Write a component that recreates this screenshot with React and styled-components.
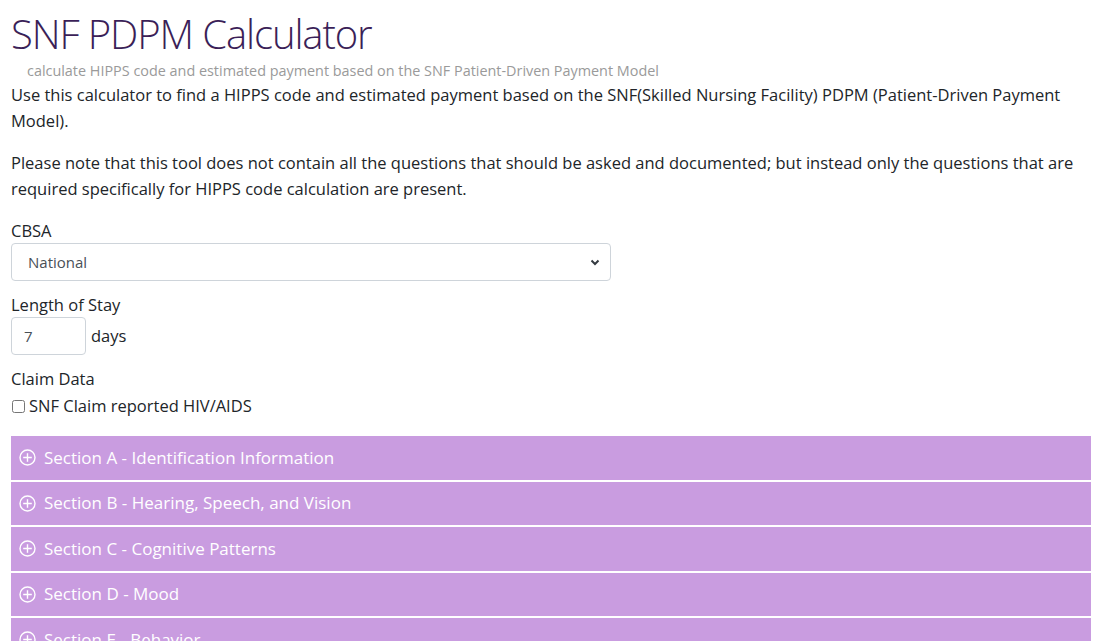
import styled, { createGlobalStyle } from 'styled-components';

const GlobalStyle = createGlobalStyle`
    body {
        margin: 0;
        font-family: "Open Sans", "Noto Sans", sans-serif;
        color: #212529;
        background: #fff;
    }
`;

const sections = [
    'Section A - Identification Information',
    'Section B - Hearing, Speech, and Vision',
    'Section C - Cognitive Patterns',
    'Section D - Mood',
    'Section E - Behavior',
];

const PlusCircle = () => (
    <svg width="17" height="17" viewBox="0 0 17 17" fill="none" stroke="#fff" strokeWidth="1.4">
        <circle cx="8.5" cy="8.5" r="7.5" />
        <path d="M8.5 4.2v8.6M4.2 8.5h8.6" />
    </svg>
);

const App = () => {
    return (
        <Page>
            <GlobalStyle />
            <Title>SNF PDPM Calculator</Title>
            <Subtitle>calculate HIPPS code and estimated payment based on the SNF Patient-Driven Payment Model</Subtitle>
            <Paragraph>
                Use this calculator to find a HIPPS code and estimated payment based on the SNF(Skilled Nursing Facility) PDPM (Patient-Driven Payment Model).
            </Paragraph>
            <Paragraph>
                Please note that this tool does not contain all the questions that should be asked and documented; but instead only the questions that are required specifically for HIPPS code calculation are present.
            </Paragraph>

            <FormGroup>
                <Label>CBSA</Label>
                <SelectBox>
                    <span>National</span>
                    <svg width="10" height="8" viewBox="0 0 10 8">
                        <path d="M1.5 2.5l3.5 3.5 3.5-3.5" fill="none" stroke="#343a40" strokeWidth="2" />
                    </svg>
                </SelectBox>
            </FormGroup>

            <FormGroup>
                <Label>Length of Stay</Label>
                <InlineRow>
                    <NumberInput defaultValue="7" />
                    <span>days</span>
                </InlineRow>
            </FormGroup>

            <FormGroup>
                <Label>Claim Data</Label>
                <CheckRow>
                    <CheckBox type="checkbox" />
                    SNF Claim reported HIV/AIDS
                </CheckRow>
            </FormGroup>

            <Accordion>
                {sections.map((s) => (
                    <SectionHeader key={s}>
                        <PlusCircle />
                        {s}
                    </SectionHeader>
                ))}
            </Accordion>
        </Page>
    );
};

export default App;

const Page = styled.div`
    padding: 0 4px 0 11px;
    font-size: 16.5px;
    line-height: 26px;
    height: 641px;
    overflow: hidden;
`;

const Title = styled.h1`
    margin: 8px 0 0;
    font-size: 40px;
    font-weight: 300;
    letter-spacing: -1.1px;
    line-height: 52px;
    color: #3b1f58;
`;

const Subtitle = styled.div`
    margin: 0 0 0 16px;
    font-size: 14.4px;
    line-height: 22px;
    color: #9a9a9a;
`;

const Paragraph = styled.p`
    margin: 0 0 16px;
`;

const FormGroup = styled.div`
    margin-bottom: 11px;
`;

const Label = styled.div`
    line-height: 25px;
`;

const SelectBox = styled.div`
    width: 600px;
    height: 38px;
    box-sizing: border-box;
    border: 1px solid #ced4da;
    border-radius: 4px;
    padding: 0 10px 0 16px;
    display: flex;
    align-items: center;
    justify-content: space-between;
    font-size: 15px;
    color: #495057;
`;

const InlineRow = styled.div`
    display: flex;
    align-items: center;
    gap: 5px;
`;

const NumberInput = styled.input`
    width: 75px;
    height: 38px;
    box-sizing: border-box;
    border: 1px solid #ced4da;
    border-radius: 4px;
    padding: 0 12px;
    font: inherit;
    font-size: 15px;
    color: #495057;
    outline: none;
`;

const CheckRow = styled.label`
    display: flex;
    align-items: center;
    gap: 4px;
    margin-top: 2px;
`;

const CheckBox = styled.input`
    margin: 0 0 0 1px;
    width: 13px;
    height: 13px;
`;

const Accordion = styled.div`
    margin-top: 17px;
    display: flex;
    flex-direction: column;
    gap: 2px;
`;

const SectionHeader = styled.div`
    height: 43.5px;
    background: #c99ce0;
    color: #fff;
    font-size: 17px;
    display: flex;
    align-items: center;
    gap: 8px;
    padding-left: 8px;
`;
